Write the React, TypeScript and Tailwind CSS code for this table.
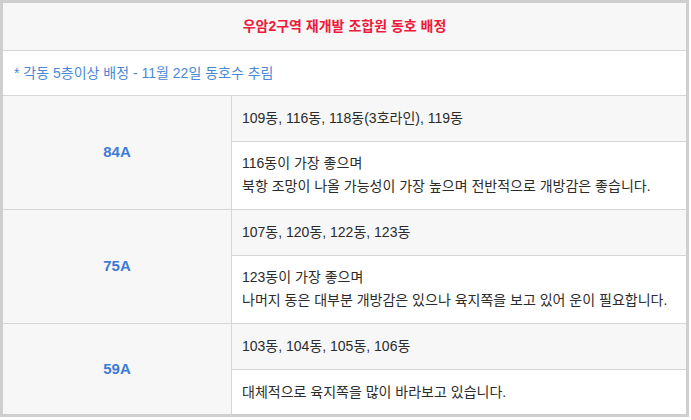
const FONT = "font-['Liberation_Sans','Noto_Sans_CJK_KR',sans-serif]";

type Group = {
  size: string;
  dong: string;
  notes: string[];
  h: string;
  subTop: string;
  subBottom: string;
};

const GROUPS: Group[] = [
  {
    size: "84A",
    dong: "109동, 116동, 118동(3호라인), 119동",
    notes: ["116동이 가장 좋으며", "북항 조망이 나올 가능성이 가장 높으며 전반적으로 개방감은 좋습니다."],
    h: "h-[114px]",
    subTop: "h-[46px]",
    subBottom: "h-[68px]",
  },
  {
    size: "75A",
    dong: "107동, 120동, 122동, 123동",
    notes: ["123동이 가장 좋으며", "나머지 동은 대부분 개방감은 있으나 육지쪽을 보고 있어 운이 필요합니다."],
    h: "h-[114px]",
    subTop: "h-[46px]",
    subBottom: "h-[68px]",
  },
  {
    size: "59A",
    dong: "103동, 104동, 105동, 106동",
    notes: ["대체적으로 육지쪽을 많이 바라보고 있습니다."],
    h: "h-[90px]",
    subTop: "h-[46px]",
    subBottom: "h-[44px]",
  },
];

export default function App() {
  return (
    <div className={`w-[691px] h-[420px] bg-white ${FONT} text-[14px] text-[#2b2b2b]`}>
      <div className="w-[689px] border-[3px] border-[#cfcfcf]">
        {/* title */}
        <div className="h-[48px] bg-[#f7f7f7] border-b border-[#d6d6d6] flex items-center justify-center">
          <span className="font-bold text-[#ee1a3b]">우암2구역 재개발 조합원 동호 배정</span>
        </div>
        {/* note */}
        <div className="h-[45px] border-b border-[#d6d6d6] flex items-center pl-[11px] text-[#4a88d6]">
          * 각동 5층이상 배정 - 11월 22일 동호수 추림
        </div>
        {GROUPS.map((g, i) => (
          <div
            key={g.size}
            className={`flex ${g.h} ${i < GROUPS.length - 1 ? "border-b border-[#d6d6d6]" : ""}`}
          >
            <div className="w-[229px] shrink-0 bg-[#f7f7f7] border-r border-[#d6d6d6] flex items-center justify-center">
              <span className="font-bold text-[15px] text-[#3d7bd4]">{g.size}</span>
            </div>
            <div className="flex-1 flex flex-col">
              <div className={`${g.subTop} bg-[#f7f7f7] border-b border-[#d6d6d6] flex items-center pl-[10px]`}>
                {g.dong}
              </div>
              <div className={`${g.subBottom} flex flex-col justify-center pl-[10px] leading-[23px]`}>
                {g.notes.map((n) => (
                  <div key={n}>{n}</div>
                ))}
              </div>
            </div>
          </div>
        ))}
      </div>
    </div>
  );
}
